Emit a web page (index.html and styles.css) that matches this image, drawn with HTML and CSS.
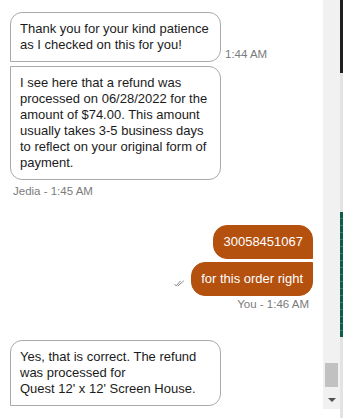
FILE: index.html
```html
<!DOCTYPE html>
<html lang="en">
<head>
<meta charset="utf-8">
<title>Chat</title>
<link rel="stylesheet" href="styles.css">
</head>
<body>
<div class="frame">
  <div class="chat">
    <div class="group incoming">
      <div class="row">
        <div class="bubble in first">Thank you for your kind patience as I checked on this for you!</div>
        <span class="time">1:44 AM</span>
      </div>
      <div class="row">
        <div class="bubble in last">I see here that a refund was processed on 06/28/2022 for the amount of $74.00. This amount usually takes 3-5 business days to reflect on your original form of payment.</div>
      </div>
      <div class="meta meta-in">Jedia - 1:45 AM</div>
    </div>

    <div class="group outgoing">
      <div class="row row-out">
        <div class="bubble out first">30058451067</div>
      </div>
      <div class="row row-out">
        <svg class="check" width="11" height="7" viewBox="0 0 11 7" aria-hidden="true">
          <path d="M0.5 4.2 L2.2 6 L6.5 0.8" fill="none" stroke="#8a8a8a" stroke-width="1"/>
          <path d="M3.8 6 L9.8 0.8" fill="none" stroke="#8a8a8a" stroke-width="1"/>
        </svg>
        <div class="bubble out last">for this order right</div>
      </div>
      <div class="meta meta-out">You - 1:46 AM</div>
    </div>

    <div class="group incoming">
      <div class="row">
        <div class="bubble in first">Yes, that is correct. The refund was processed for<br>Quest 12' x 12' Screen House.</div>
      </div>
    </div>
  </div>

  <div class="scrollbar">
    <div class="thumb"></div>
    <div class="arrow-box"><span class="arrow"></span></div>
  </div>

  <div class="strip">
    <div class="seg seg-dark"></div>
    <div class="seg seg-light"></div>
    <div class="seg seg-green"></div>
    <div class="seg seg-light2"></div>
  </div>
</div>
</body>
</html>
```

FILE: styles.css
```css
* { box-sizing: border-box; }

html, body {
  margin: 0;
  padding: 0;
  background: #ffffff;
}

body {
  font-family: "Liberation Sans", Arial, sans-serif;
  width: 343px;
  height: 418px;
  overflow: hidden;
}

.frame {
  display: flex;
  width: 343px;
  height: 418px;
}

.chat {
  width: 323px;
  flex: none;
  padding: 12px 10px 0 10px;
  display: flex;
  flex-direction: column;
}

.group {
  display: flex;
  flex-direction: column;
}

.incoming { align-items: flex-start; }

.outgoing {
  align-items: flex-end;
  margin-top: 27px;
}

.outgoing + .incoming { margin-top: 29px; }

.row {
  display: flex;
  align-items: flex-end;
  gap: 4px;
}

.incoming .row + .row { margin-top: 4px; }

.row-out { gap: 6px; }
.outgoing .row + .row { margin-top: 3px; }

.bubble {
  font-size: 13px;
  line-height: 16px;
}

.bubble.in {
  width: 211px;
  padding: 8px 9px;
  border: 1px solid #a9a9a9;
  color: #1b1b1b;
  background: #ffffff;
}

.bubble.in.first { border-radius: 12px 12px 12px 0; }
.bubble.in.last { border-radius: 0 12px 12px 12px; }

.bubble.out {
  padding: 8px 9px;
  border: 1px solid #b4510f;
  background: #b4510f;
  color: #ffffff;
}

.bubble.out.first { border-radius: 14px 14px 0 14px; }
.bubble.out.last { border-radius: 14px 0 14px 14px; }

.check {
  flex: none;
  margin-bottom: 9px;
}

.time {
  font-size: 11.5px;
  line-height: 14px;
  color: #7b7b7b;
  padding-bottom: 1px;
}

.meta {
  font-size: 11.5px;
  line-height: 14px;
  color: #7b7b7b;
}

.meta-in {
  margin-top: 4px;
  padding-left: 3px;
}

.meta-out {
  margin-top: 1px;
  padding-right: 4px;
}

/* scrollbar */
.scrollbar {
  width: 17px;
  height: 409px;
  flex: none;
  background: #f1f1f1;
  display: flex;
  flex-direction: column;
  justify-content: flex-end;
  align-items: center;
}

.thumb {
  width: 13px;
  height: 24px;
  background: #c1c1c1;
}

.arrow-box {
  height: 22px;
  width: 17px;
  display: flex;
  justify-content: center;
  padding-top: 11px;
}

.arrow {
  width: 0;
  height: 0;
  border-left: 4px solid transparent;
  border-right: 4px solid transparent;
  border-top: 4px solid #505050;
}

/* right edge strip */
.strip {
  width: 3px;
  flex: none;
  display: flex;
  flex-direction: column;
}

.seg-dark { height: 73px; background: #1b201f; }
.seg-light { height: 139px; background: #e3e3e3; }
.seg-green {
  height: 125px;
  background: repeating-linear-gradient(180deg, #0c5c4c 0 6px, #3d7d70 6px 7px);
}
.seg-light2 { flex: 1; background: #e3e3e3; }
```
